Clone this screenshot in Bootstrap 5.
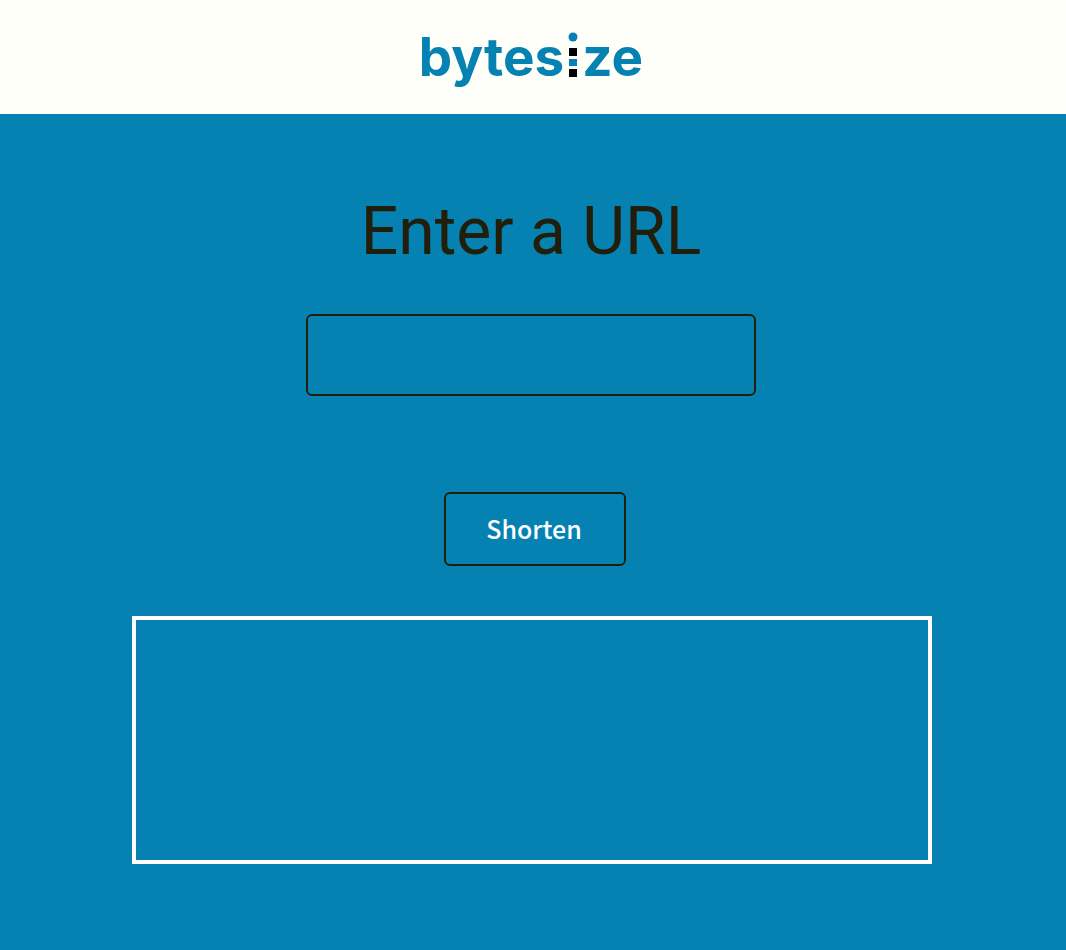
<!DOCTYPE html>
<html lang="en">
<head>
<meta charset="utf-8">
<meta name="viewport" content="width=device-width, initial-scale=1">
<title>bytesize</title>
<link href="https://cdn.jsdelivr.net/npm/bootstrap@5.3.0/dist/css/bootstrap.min.css" rel="stylesheet">
<style>
  body { background: #0582b2; color: #211f0b; font-family: Roboto, sans-serif; }
  .site-header { background: #fffffa; height: 114px; padding: 26px 4px 0 0; }
  .brand { color: #0582b2; font: 700 53px/62px Inter, sans-serif; }
  .brand-i { width: 10px; height: 46px; margin: 6px 4px 0; }
  .shortener { padding: 80px 18px 86px 16px; }
  .title { font-size: 66px; line-height: 76px; font-weight: 400; margin: 0 2px 44px 0; }
  .url-box, .url-box:focus { width: 450px; height: 82px; background: transparent; border: 2px solid #211f0b; border-radius: 6px; color: #fff; font-size: 28px; margin-right: 2px; }
  .shorten-btn { width: 182px; height: 74px; margin: 96px 0 50px 6px; border: 2px solid #211f0b; border-radius: 6px; color: #fff; font: 500 25px/38px "Noto Sans CJK JP", sans-serif; padding: 0 2px 2px 0; }
  .result { width: 800px; height: 248px; border: 4px solid #fff; }
</style>
</head>
<body>
<header class="site-header d-flex justify-content-center">
  <a href="#" class="brand d-flex align-items-start text-decoration-none" aria-label="bytesize">
    <span>bytes</span>
    <svg class="brand-i" viewBox="0 0 10 46" aria-hidden="true">
      <circle cx="5" cy="5" r="4.5" fill="#0582b2"/>
      <path d="M1 16h8v8H1zM1 37h8v8H1z" fill="#000"/>
      <path d="M1 27h8v7H1z" fill="#0582b2"/>
    </svg>
    <span>ze</span>
  </a>
</header>
<main class="shortener container-fluid">
  <form class="d-flex flex-column align-items-center" onsubmit="return false">
    <label for="url" class="title">Enter a URL</label>
    <input id="url" type="text" class="url-box form-control mw-100">
    <button type="submit" class="shorten-btn btn">Shorten</button>
  </form>
  <section class="result mw-100 mx-auto" aria-live="polite" aria-label="Shortened link"></section>
</main>
<script src="https://cdn.jsdelivr.net/npm/bootstrap@5.3.0/dist/js/bootstrap.bundle.min.js"></script>
</body>
</html>
